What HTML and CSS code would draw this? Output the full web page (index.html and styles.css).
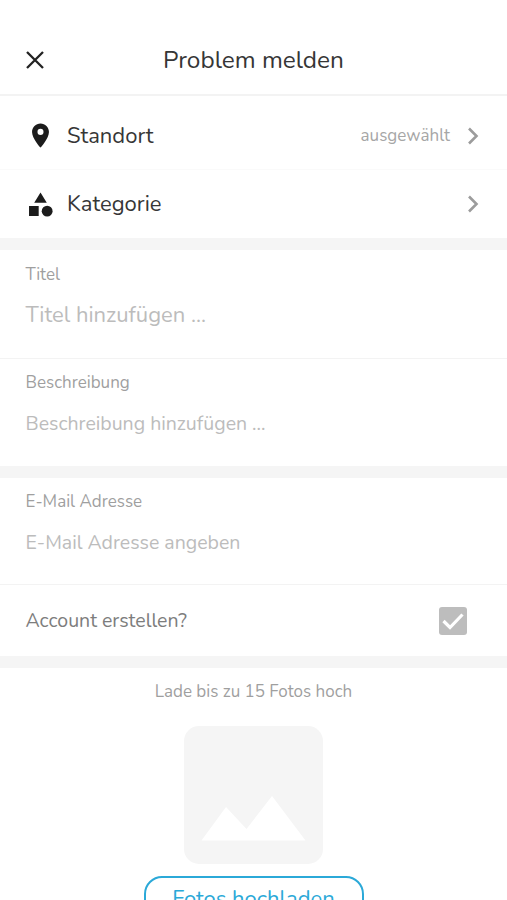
FILE: index.html
```html
<!DOCTYPE html>
<html lang="de">
<head>
<meta charset="utf-8">
<meta name="viewport" content="width=device-width, initial-scale=1">
<title>Problem melden</title>
<link rel="stylesheet" href="styles.css">
</head>
<body>
<main class="screen">
  <header class="header">
    <svg class="close" viewBox="0 0 20 20" aria-label="Schließen"><path d="M2 2 18 18M18 2 2 18"/></svg>
    <h1 class="title">Problem melden</h1>
  </header>
  <section class="links">
    <div class="row row-first">
      <svg class="row-icon" viewBox="0 0 24 24"><path d="M12 2C8.13 2 5 5.13 5 9c0 5.25 7 13 7 13s7-7.75 7-13c0-3.87-3.13-7-7-7zm0 9.5A2.5 2.5 0 1 1 12 6.500a2.500 2.500 0 0 1 0 5z"/></svg>
      <span class="row-name">Standort</span>
      <span class="row-value">ausgewählt</span>
      <svg class="chevron" viewBox="0 0 12 18"><path d="M2 1.500 9.500 9 2 16.500"/></svg>
    </div>
    <div class="row">
      <svg class="row-icon" viewBox="0 0 24 24"><path d="M12 2 6.800 10.500h10.400zM2.500 13.300h8v8.200h-8z"/><circle cx="17.500" cy="17.500" r="4.500"/></svg>
      <span class="row-name">Kategorie</span>
      <svg class="chevron" viewBox="0 0 12 18"><path d="M2 1.500 9.500 9 2 16.500"/></svg>
    </div>
  </section>
  <section class="block">
    <div class="field field-title">
      <div class="label">Titel</div>
      <div class="hint hint-large">Titel hinzufügen ...</div>
    </div>
    <div class="field field-text">
      <div class="label">Beschreibung</div>
      <div class="hint">Beschreibung hinzufügen ...</div>
    </div>
  </section>
  <section class="block">
    <div class="field field-mail">
      <div class="label">E-Mail Adresse</div>
      <div class="hint">E-Mail Adresse angeben</div>
    </div>
    <div class="account">
      <span>Account erstellen?</span>
      <svg class="check" viewBox="0 0 28 28"><rect width="28" height="28" rx="3"/><path d="M4.500 14 11 20.500 23.500 7.500"/></svg>
    </div>
  </section>
  <section class="block photos">
    <div class="label">Lade bis zu 15 Fotos hoch</div>
    <svg class="picture" viewBox="0 0 139 138"><rect width="139" height="138" rx="15"/><path d="M17.500 114.500 42 81 62.500 103 88 70 121.500 114.500z"/></svg>
    <div class="button">Fotos hochladen</div>
  </section>
</main>
</body>
</html>
```
FILE: styles.css
```css
* { box-sizing: border-box; }
body {
  margin: 0;
  background: #fff;
  color: #363636;
  font-family: Nunito, Lato, sans-serif;
  white-space: nowrap;
}
.screen { height: 900px; overflow: hidden; }
svg { display: block; flex: none; }
.header {
  display: grid;
  grid-template-columns: 45px 1fr 45px;
  align-items: center;
  height: 96px;
  padding-top: 25px;
  border-bottom: 2px solid #f3f3f3;
}
.close { width: 20px; height: 20px; margin-left: 25px; fill: none; stroke: #222; stroke-width: 2.3; }
.title { margin: 0; font-size: 24.4px; font-weight: 400; line-height: 30px; text-align: center; }
.row {
  display: flex;
  align-items: center;
  height: 68px;
  padding: 0 28.5px 0 25.5px;
}
.row-first { height: 74px; padding-top: 6px; border-bottom: 1px solid #fafafa; }
.row-icon { width: 29px; height: 29px; fill: #1c1c1c; }
.row-name { margin-left: 12.5px; font-size: 22px; line-height: 28px; }
.row-value { margin-left: auto; margin-right: 16.5px; padding-top: 1px; color: #a6a6a6; font-size: 17px; line-height: 24px; }
.chevron { width: 12px; height: 18px; fill: none; stroke: #9c9c9c; stroke-width: 2.6; }
.row-name + .chevron { margin-left: auto; }
.block { border-top: 12px solid #f5f5f5; }
.field { padding: 12px 25.5px 0; }
.field-title { height: 109px; padding-top: 13px; border-bottom: 1px solid #f3f3f3; }
.field-title .hint { margin-top: 15px; }
.field-text { height: 106.500px; }
.field-mail { height: 107.500px; border-bottom: 1px solid #f3f3f3; }
.label { color: #9f9f9f; font-size: 17px; line-height: 24px; }
.hint { margin-top: 16px; color: #bcbcbc; font-size: 19.5px; line-height: 26px; }
.hint-large { font-size: 22px; }
.account {
  display: flex;
  align-items: center;
  justify-content: space-between;
  height: 71px;
  padding: 0 40px 0 25.5px;
  color: #7d7d7d;
  font-size: 19.5px;
}
.check { width: 28px; height: 28px; fill: #bdbdbd; }
.check path { fill: none; stroke: #fff; stroke-width: 3.2; }
.photos { display: flex; flex-direction: column; align-items: center; padding-top: 12px; }
.picture { width: 139px; height: 138px; margin-top: 22px; fill: #f5f5f5; }
.picture path { fill: #fff; }
.button {
  width: 220px;
  height: 48px;
  margin-top: 12px;
  border: 2px solid #2ba9d8;
  border-radius: 18px;
  color: #2ba9d8;
  font-size: 22px;
  line-height: 43px;
  text-align: center;
}
```
